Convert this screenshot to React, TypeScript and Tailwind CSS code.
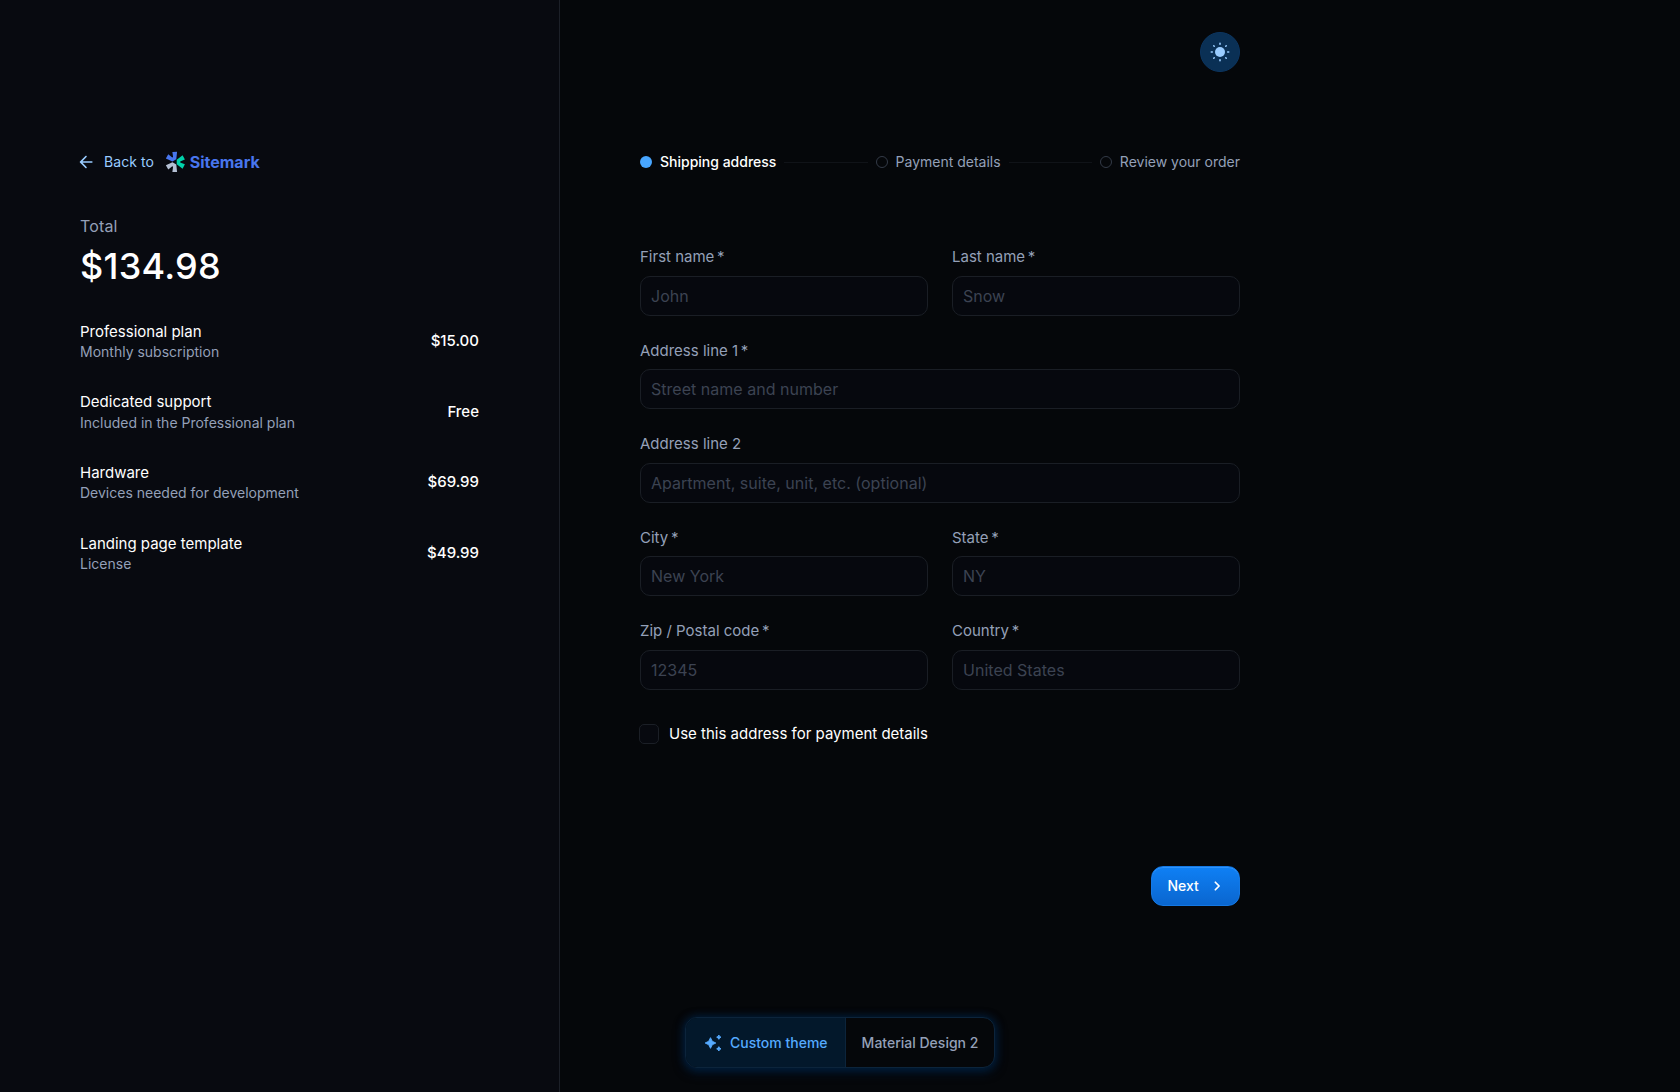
const items = [
  { name: "Professional plan", desc: "Monthly subscription", price: "$15.00" },
  { name: "Dedicated support", desc: "Included in the Professional plan", price: "Free" },
  { name: "Hardware", desc: "Devices needed for development", price: "$69.99" },
  { name: "Landing page template", desc: "License", price: "$49.99" },
];

function Logo() {
  return (
    <span className="ml-[11.5px] flex items-center">
      <svg width="20.8" height="21.6" viewBox="0 0 19 19" preserveAspectRatio="none" className="shrink-0">
        <path fill="#B4C0D3" d="m.787 12.567 6.055-2.675 3.485 2.006.704 6.583-4.295-.035.634-4.577-.74-.422-3.625 2.817-2.218-3.697Z" />
        <path fill="#00D3AB" d="m10.714 11.616 5.352 3.908 2.112-3.767-4.295-1.725v-.845l4.295-1.76-2.112-3.732-5.352 3.908v4.013Z" />
        <path fill="#4876EF" d="m10.327 7.286.704-6.583-4.295.07.634 4.577-.74.422-3.66-2.816L.786 6.617l6.055 2.676 3.485-2.007Z" />
      </svg>
      <span className="ml-[3.5px] text-[16px] leading-5 font-bold text-[#4876EE]">Sitemark</span>
    </span>
  );
}

function ArrowBack() {
  return (
    <svg width="20" height="20" viewBox="0 0 24 24" fill="currentColor" className="-ml-1 mr-2 shrink-0">
      <path d="M19 11H7.83l4.88-4.88c.39-.39.39-1.03 0-1.42-.39-.39-1.02-.39-1.41 0l-6.59 6.59c-.39.39-.39 1.02 0 1.41l6.59 6.59c.39.39 1.02.39 1.41 0 .39-.39.39-1.02 0-1.41L7.83 13H19c.55 0 1-.45 1-1s-.45-1-1-1z" />
    </svg>
  );
}

function Sun() {
  return (
    <svg width="24" height="24" viewBox="-12 -12 24 24" fill="none" stroke="#99CCFF" strokeWidth="1.6" strokeLinecap="round">
      <circle r="5" fill="#99CCFF" stroke="none" />
      <path d="M0-8.7v1M0 7.7v1M-8.7 0h1M7.7 0h1M-6.2-6.2l.4.4M5.8 5.8l.4.4M-6.2 6.2l.4-.4M5.8-5.8l.4-.4" />
    </svg>
  );
}

function Sparkles() {
  return (
    <svg width="20" height="20" viewBox="0 0 24 24" fill="currentColor" stroke="currentColor" strokeWidth="1.1" strokeLinejoin="round">
      <path d="m19 2.4.9 1.7 1.7.9-1.7.9-.9 1.7-.9-1.7-1.7-.9 1.7-.9zM9 5.6l2.1 4.3 4.3 2.1-4.3 2.1L9 18.4l-2.1-4.3L2.6 12l4.3-2.1zM19 16.4l.9 1.7 1.7.9-1.7.9-.9 1.7-.9-1.7-1.7-.9 1.7-.9z" />
    </svg>
  );
}

function Field({ label, placeholder, required, wide }: { label: string; placeholder: string; required?: boolean; wide?: boolean }) {
  return (
    <label className={wide ? "col-span-2 flex flex-col" : "flex flex-col"}>
      <span className="h-[29.6px] text-[15px] leading-[22px] text-[#94A0B8]">
        {label}
        {required ? "\u2009*" : ""}
      </span>
      <input
        placeholder={placeholder}
        className="h-10 w-full rounded-[10px] border border-[#1a1e25] bg-[#06080E] px-[10px] text-[16px] tracking-[0.02px] outline-none placeholder:text-[#3c4352] placeholder:opacity-100"
      />
    </label>
  );
}

function Step({ label, active }: { label: string; active?: boolean }) {
  return (
    <span className="flex items-center gap-2">
      <span className={active ? "size-3 rounded-full bg-[#48A6FF]" : "size-3 rounded-full border border-[#333a47]"} />
      <span className={active ? "pb-px text-[14px] leading-5 font-medium text-white" : "pb-px text-[14px] leading-5 text-[#94A0B8]"}>{label}</span>
    </span>
  );
}

function Connector() {
  return <span className="mx-2 h-px flex-1 bg-[#101318]" />;
}

export default function App() {
  return (
    <div className="relative flex h-[1092px] w-[1680px] overflow-hidden bg-[#05070A] font-[Inter,sans-serif]">
      <aside className="flex w-[560px] shrink-0 flex-col border-r border-[#1c2028] bg-[#080A10] px-20 pt-[142px]">
        <div className="flex h-10 items-center text-[14px] text-[#99CCFF]">
          <ArrowBack />
          <span className="pb-px leading-5 tracking-[0.06px]">Back to</span>
          <Logo />
        </div>
        <div className="mt-8 h-[25px] text-[16px] leading-6 tracking-[0.15px] text-[#94A0B8]">Total</div>
        <div className="h-[67.2px] text-[36px] leading-[54px] font-medium tracking-[0.25px] text-white">$134.98</div>
        {items.map((i) => (
          <div key={i.name} className="flex h-[70.6px] items-center justify-between">
            <div>
              <div className="text-[15px] leading-[21.2px] text-white">{i.name}</div>
              <div className="text-[14px] leading-[20px] text-[#94A0B8]">{i.desc}</div>
            </div>
            <span className="text-[15px] font-medium text-white">{i.price}</span>
          </div>
        ))}
      </aside>

      <main className="flex w-[760px] flex-col px-20 pt-8">
        <button className="flex size-10 items-center justify-center self-end rounded-full border border-[#0c3560] bg-[#0A3055]">
          <Sun />
        </button>
        <div className="mt-20 flex h-5 items-center">
          <Step active label="Shipping address" />
          <Connector />
          <Step label="Payment details" />
          <Connector />
          <Step label="Review your order" />
        </div>
        <div className="mt-[74px] grid grid-cols-2 gap-6">
          <Field label="First name" placeholder="John" required />
          <Field label="Last name" placeholder="Snow" required />
          <Field label="Address line 1" placeholder="Street name and number" required wide />
          <Field label="Address line 2" placeholder="Apartment, suite, unit, etc. (optional)" wide />
          <Field label="City" placeholder="New York" required />
          <Field label="State" placeholder="NY" required />
          <Field label="Zip / Postal code" placeholder="12345" required />
          <Field label="Country" placeholder="United States" required />
        </div>
        <div className="mt-[34px] -ml-px flex h-5 items-center gap-[10px]">
          <span className="size-5 rounded-[5px] border border-[#1b1f26] bg-[#07090F]" />
          <span className="text-[15px] leading-5 text-white">Use this address for payment details</span>
        </div>
        <button className="mt-[122px] flex h-10 w-[89.5px] items-center self-end rounded-xl border border-[#1478E4] bg-linear-to-b from-[#0F80F5] to-[#0A66CF] pl-4 text-[14px] font-medium text-white shadow-[inset_0_1px_0_#2F93FB]">
          Next
          <svg width="20" height="20" viewBox="0 0 24 24" fill="none" stroke="currentColor" strokeWidth="2.1" strokeLinecap="round" strokeLinejoin="round" className="ml-2">
            <path d="m10 7.5 4.5 4.5-4.5 4.5" />
          </svg>
        </button>
      </main>

      <div className="absolute bottom-6 left-1/2 flex h-[51px] w-[310px] -translate-x-1/2 overflow-hidden rounded-xl border border-[#0C243B] bg-[#05070A] text-[14px] font-medium shadow-[0_0_8px_#001D3A,0_3px_12px_#001D3A]">
        <div className="flex w-[160px] items-center gap-[7px] border-r border-[#0C243B] bg-[#03182B] pl-[17px] text-[#55AAFF]">
          <Sparkles />
          Custom theme
        </div>
        <div className="flex flex-1 items-center justify-center text-[#94A0B8]">Material Design 2</div>
      </div>
    </div>
  );
}
